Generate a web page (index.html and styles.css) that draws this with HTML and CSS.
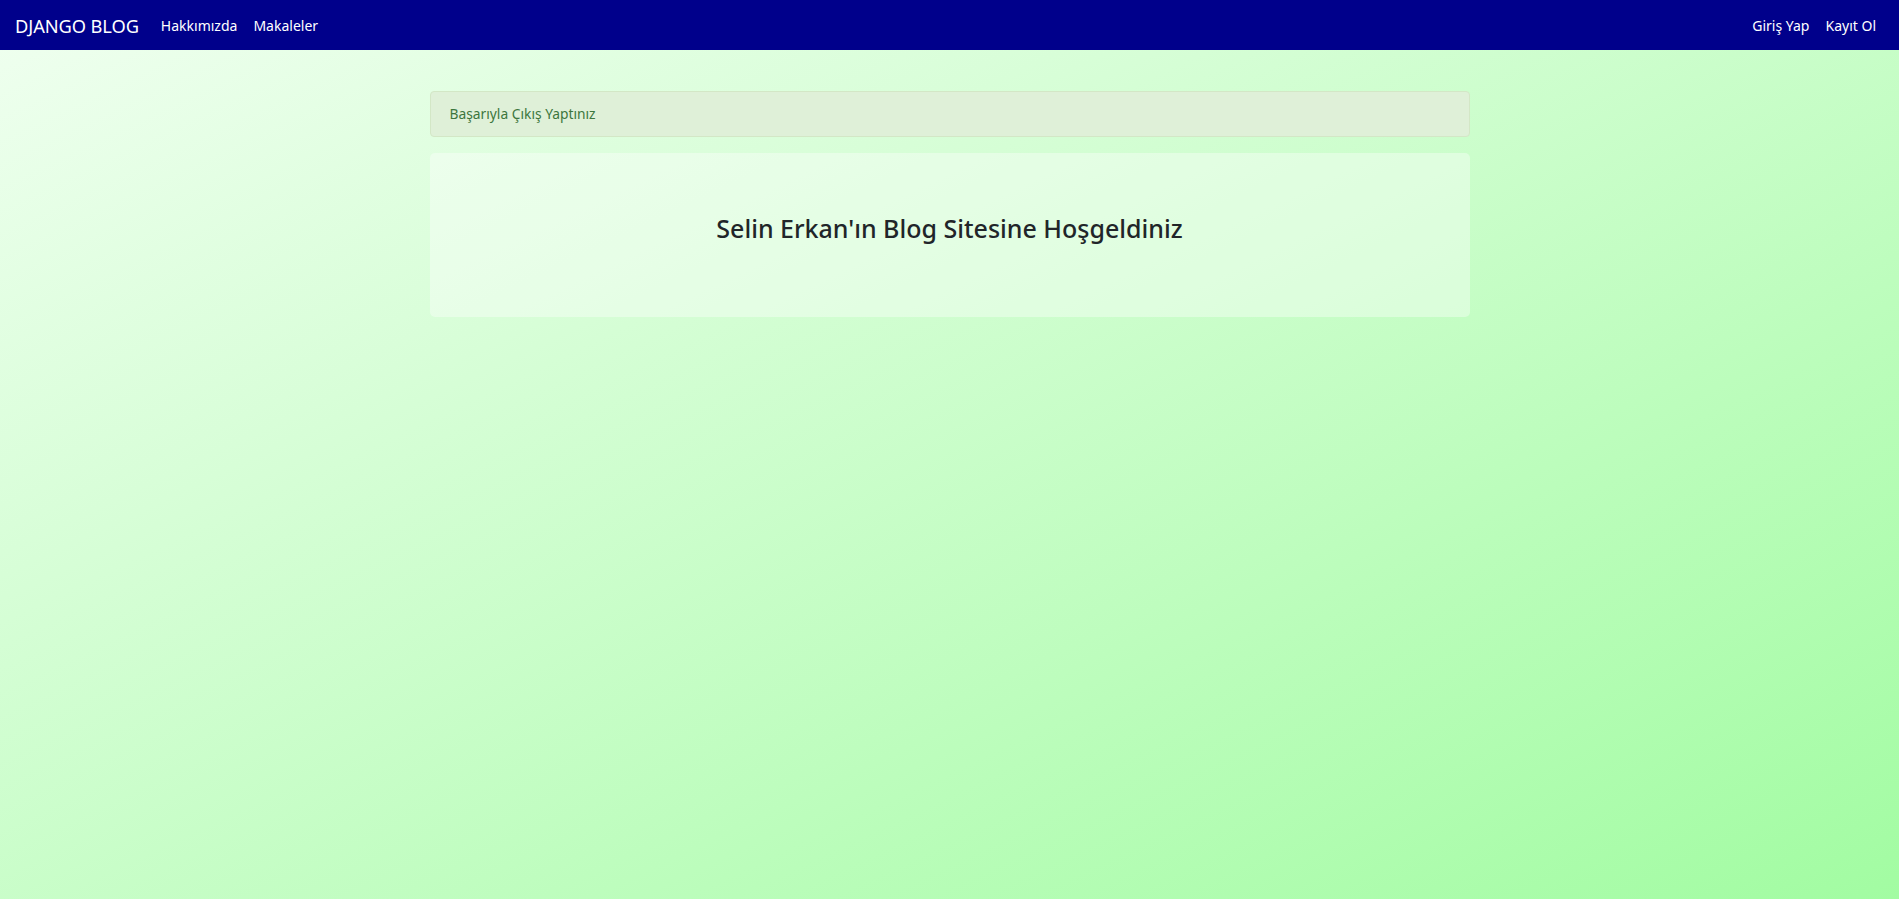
FILE: index.html
```html
<!DOCTYPE html>
<html lang="tr">
<head>
<meta charset="utf-8">
<title>Django Blog</title>
<link rel="stylesheet" href="styles.css">
</head>
<body>
<nav class="navbar">
  <div class="nav-left">
    <a class="brand" href="#">DJANGO BLOG</a>
    <a class="nav-link" href="#">Hakkımızda</a>
    <a class="nav-link" href="#">Makaleler</a>
  </div>
  <div class="nav-right">
    <a class="nav-link" href="#">Giriş Yap</a>
    <a class="nav-link" href="#">Kayıt Ol</a>
  </div>
</nav>
<main class="container">
  <div class="alert">Başarıyla Çıkış Yaptınız</div>
  <section class="jumbotron">
    <h3 class="title">Selin Erkan'ın Blog Sitesine Hoşgeldiniz</h3>
  </section>
</main>
</body>
</html>
```
FILE: styles.css
```css
html, body {
  margin: 0;
  padding: 0;
  height: 100%;
}
body {
  font-family: "Noto Sans", "Open Sans", sans-serif;
  background: linear-gradient(to bottom right, #f0fff0, #a2fca2);
  min-height: 899px;
  color: #212529;
}
.navbar {
  height: 50px;
  background: #00008b;
  display: flex;
  align-items: center;
  justify-content: space-between;
  padding: 0 15px 0 15px;
  box-sizing: border-box;
}
.nav-left, .nav-right {
  display: flex;
  align-items: center;
}
.navbar a {
  color: #ffffff;
  text-decoration: none;
}
.brand {
  font-size: 18.3px;
  margin-right: 14px;
  letter-spacing: -0.1px;
}
.nav-link {
  font-size: 14px;
  padding: 0 8px;
}
.container {
  width: 1040px;
  margin: 41px auto 0;
}
.alert {
  background: #dff0d8;
  border: 1px solid #d3e7c6;
  border-radius: 4px;
  color: #3c763d;
  font-size: 13.8px;
  line-height: 22px;
  padding: 11px 19px;
  margin-bottom: 16px;
}
.jumbotron {
  background: rgba(255, 255, 255, 0.38);
  border-radius: 5px;
  padding: 60px 32px 66px;
  text-align: center;
}
.title {
  margin: 0 0 8px;
  font-size: 25px;
  line-height: 30px;
  font-weight: 500;
  color: #212529;
}
```
